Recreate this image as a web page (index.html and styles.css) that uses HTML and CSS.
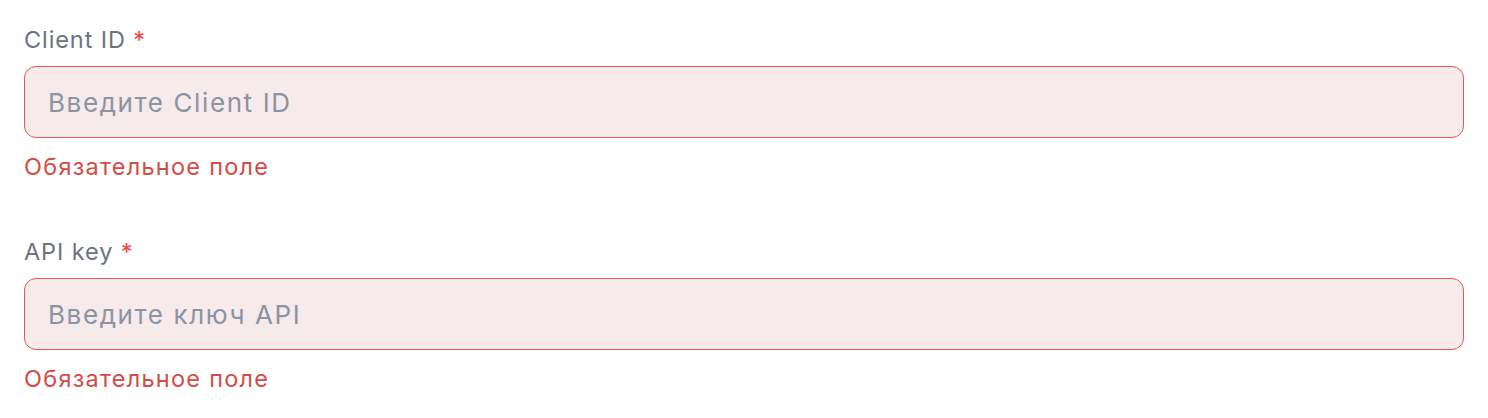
FILE: index.html
```html
<!DOCTYPE html>
<html lang="ru">
<head>
<meta charset="utf-8">
<link rel="stylesheet" href="styles.css">
</head>
<body>
<form class="form">
  <div class="field">
    <label class="label" for="client">Client ID <span class="req">*</span></label>
    <input class="input" id="client" type="text" placeholder="Введите Client ID">
    <div class="error">Обязательное поле</div>
  </div>
  <div class="field">
    <label class="label" for="key">API key <span class="req">*</span></label>
    <input class="input" id="key" type="text" placeholder="Введите ключ API">
    <div class="error">Обязательное поле</div>
  </div>
</form>
</body>
</html>
```
FILE: styles.css
```css
html, body {
  margin: 0;
  background: #ffffff;
}
body {
  font-family: Inter, "Noto Sans", sans-serif;
  padding: 24px;
}
.form {
  display: flex;
  flex-direction: column;
  gap: 53px;
}
.field {
  display: flex;
  flex-direction: column;
}
.label {
  font-size: 23.5px;
  line-height: 32px;
  letter-spacing: 0.9px;
  color: #6b7280;
  margin-bottom: 10px;
}
.req {
  color: #ef4444;
}
.input {
  box-sizing: border-box;
  width: 100%;
  height: 72px;
  border: 1px solid #de5a55;
  border-radius: 12px;
  background: #f6eaea;
  padding: 0 23px;
  font-family: Inter, "Noto Sans", sans-serif;
  font-size: 26px;
  letter-spacing: 1.6px;
  color: #374151;
  outline: none;
}
.input::placeholder {
  color: #8a94a3;
}
.error {
  margin-top: 13px;
  font-size: 23.5px;
  line-height: 32px;
  letter-spacing: 1.25px;
  color: #d54b45;
}
```
